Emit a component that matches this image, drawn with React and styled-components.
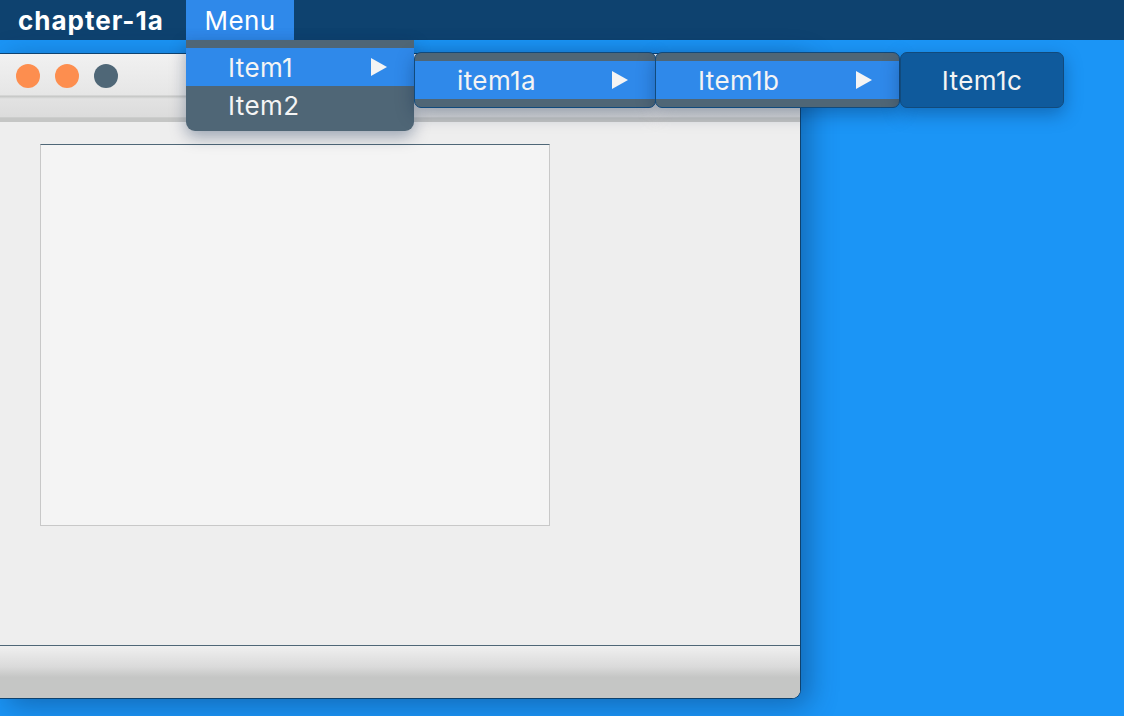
import React from 'react';
import styled, { createGlobalStyle } from 'styled-components';

const GlobalStyle = createGlobalStyle`
  html, body {
    margin: 0;
    padding: 0;
    background: #1b95f6;
    font-family: Inter, "Open Sans", "Liberation Sans", sans-serif;
  }
`;

const Page = styled.div`
  width: 1124px;
  height: 716px;
  overflow: hidden;
  display: flex;
  flex-direction: column;
  background: #1b95f6;
`;

const TopBar = styled.div`
  height: 40px;
  flex: none;
  display: flex;
  align-items: stretch;
  background: #0e426f;
  color: #fff;
`;

const AppName = styled.div`
  width: 186px;
  box-sizing: border-box;
  padding: 0 0 0 18px;
  display: flex;
  align-items: center;
  font-size: 26px;
  font-weight: 700;
  letter-spacing: 1px;
  white-space: nowrap;
`;

const MenuTitle = styled.div`
  width: 108px;
  display: flex;
  align-items: center;
  justify-content: center;
  font-size: 26px;
  letter-spacing: 0.4px;
  background: ${(p) => (p.$open ? '#2f89ea' : 'transparent')};
`;

const Desktop = styled.div`
  position: relative;
  flex: 1;
`;

const Window = styled.div`
  position: absolute;
  left: 0;
  top: 13px;
  width: 800px;
  height: 644px;
  display: flex;
  flex-direction: column;
  border: 1px solid #0e426f;
  border-left: none;
  border-radius: 0 9px 9px 0;
  overflow: hidden;
  box-shadow: 8px 6px 28px rgba(8, 50, 100, 0.45);
  background: #eeeeee;
`;

const TitleBar = styled.div`
  height: 68px;
  flex: none;
  display: flex;
  align-items: flex-start;
  gap: 15px;
  padding: 10px 0 0 16px;
  box-sizing: border-box;
  background: linear-gradient(
    to bottom,
    #f1f1f1 0%,
    #e6e6e6 60%,
    #c5c6c5 62%,
    #e2e2e2 66%,
    #dcdcdc 92%,
    #c5c6c5 94%
  );
`;

const Light = styled.span`
  width: 24px;
  height: 24px;
  border-radius: 50%;
  background: ${(p) => p.$color};
`;

const Body = styled.div`
  flex: 1;
  padding: 22px 40px;
  background: #eeeeee;
`;

const Panel = styled.div`
  width: 510px;
  height: 382px;
  box-sizing: border-box;
  background: #f4f4f4;
  border: 1px solid #c8c8c8;
  border-top-color: #4f6777;
`;

const BottomBar = styled.div`
  height: 52px;
  flex: none;
  border-top: 1px solid #4f6777;
  background: linear-gradient(to bottom, #f0f0f0 0%, #dadada 40%, #c5c6c5 60%, #c5c6c5 100%);
`;

const Dropdown = styled.div`
  position: absolute;
  left: 186px;
  top: 0;
  width: 228px;
  padding: 8px 0 7px;
  background: #4f6676;
  border-radius: 0 0 9px 9px;
  box-shadow: 0 6px 16px rgba(0, 30, 70, 0.35);
`;

const SubMenu = styled.div`
  position: absolute;
  left: ${(p) => p.$left}px;
  top: 12px;
  width: ${(p) => p.$width}px;
  padding: 8px 0;
  box-sizing: border-box;
  background: ${(p) => p.$bg || '#4f6676'};
  border: 1px solid #114a7c;
  border-radius: 7px;
  box-shadow: 0 6px 18px rgba(0, 30, 70, 0.35);
`;

const Item = styled.div`
  height: 38px;
  display: flex;
  align-items: center;
  justify-content: ${(p) => (p.$center ? 'center' : 'space-between')};
  padding: ${(p) => (p.$center ? '0' : `0 26px 0 ${p.$indent || 42}px`)};
  color: #f4f4f4;
  font-size: 26px;
  letter-spacing: 0.4px;
  background: ${(p) => (p.$active ? '#2f89ea' : 'transparent')};
`;

const Arrow = () => (
  <svg width="18" height="18" viewBox="0 0 18 18">
    <polygon points="1,0 17,9 1,18" fill="#f4f4f4" />
  </svg>
);

export default function App() {
  return (
    <Page>
      <GlobalStyle />
      <TopBar>
        <AppName>chapter-1a</AppName>
        <MenuTitle $open>Menu</MenuTitle>
      </TopBar>
      <Desktop>
        <Window>
          <TitleBar>
            <Light $color="#fd8e4f" />
            <Light $color="#fd8e4f" />
            <Light $color="#4f6777" />
          </TitleBar>
          <Body>
            <Panel />
          </Body>
          <BottomBar />
        </Window>

        <Dropdown>
          <Item $active>
            Item1 <Arrow />
          </Item>
          <Item>Item2</Item>
        </Dropdown>
        <SubMenu $left={414} $width={242}>
          <Item $active>
            item1a <Arrow />
          </Item>
        </SubMenu>
        <SubMenu $left={655} $width={245}>
          <Item $active>
            Item1b <Arrow />
          </Item>
        </SubMenu>
        <SubMenu $left={900} $width={164} $bg="#0f5a9c">
          <Item $center>Item1c</Item>
        </SubMenu>
      </Desktop>
    </Page>
  );
}
